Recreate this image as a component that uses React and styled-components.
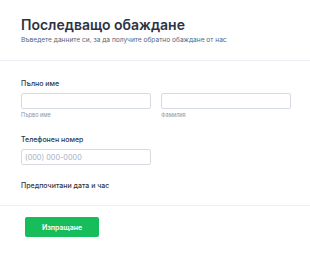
import React from "react";
import styled, { createGlobalStyle } from "styled-components";

const Global = createGlobalStyle`
  html, body { margin: 0; padding: 0; background: #ffffff; }
  body { font-family: Inter, "Noto Sans", sans-serif; -webkit-font-smoothing: antialiased; }
  * { box-sizing: border-box; }
`;

const Page = styled.div`
  width: 310px;
  background: #fff;
`;

const Header = styled.header`
  padding: 16px 19px 15px 21px;
  border-bottom: 1px solid #eceef3;
`;

const Title = styled.h1`
  margin: 0 0 2px;
  font-size: 14px;
  line-height: 18px;
  font-weight: 600;
  color: #2c3345;
`;

const Subtitle = styled.p`
  margin: 0;
  font-size: 6.6px;
  line-height: 9px;
  color: #57647e;
`;

const Body = styled.div`
  padding: 18px 19px 15px 21px;
  display: flex;
  flex-direction: column;
  gap: 16px;
  border-bottom: 1px solid #eceef3;
`;

const Field = styled.div`
  display: flex;
  flex-direction: column;
`;

const Label = styled.label`
  font-size: 7px;
  line-height: 9px;
  font-weight: 500;
  color: #2f3542;
`;

const Row = styled.div`
  display: flex;
  gap: 10px;
  margin-top: 5px;
`;

const Col = styled.div`
  display: flex;
  flex-direction: column;
  width: 130px;
`;

const Input = styled.input`
  width: 130px;
  height: 16px;
  margin: 0;
  margin-top: ${(p) => p.$mt || "0"};
  padding: 0 3px;
  border: 1px solid #d6dae3;
  border-radius: 2px;
  background: #fff;
  font-family: Inter, "Noto Sans", sans-serif;
  font-size: 7.3px;
  color: #2c3345;
  outline: none;
  &::placeholder { color: #a9afc0; }
`;

const SubLabel = styled.span`
  margin-top: 3px;
  font-size: 5.5px;
  line-height: 7px;
  color: #8a93a6;
`;

const Footer = styled.div`
  display: flex;
  padding: 11px 25px;
`;

const Button = styled.button`
  width: 74px;
  height: 20px;
  border: none;
  border-radius: 2px;
  background: #18bd5b;
  color: #fff;
  font-family: Inter, "Noto Sans", sans-serif;
  font-size: 7px;
  font-weight: 600;
  padding: 0;
  cursor: pointer;
`;

export default function App() {
  return (
    <Page>
      <Global />
      <Header>
        <Title>Последващо обаждане</Title>
        <Subtitle>Въведете данните си, за да получите обратно обаждане от нас</Subtitle>
      </Header>
      <Body>
        <Field>
          <Label>Пълно име</Label>
          <Row>
            <Col>
              <Input />
              <SubLabel>Първо име</SubLabel>
            </Col>
            <Col>
              <Input />
              <SubLabel>Фамилия</SubLabel>
            </Col>
          </Row>
        </Field>
        <Field>
          <Label>Телефонен номер</Label>
          <Input $mt="5px" placeholder="(000) 000-0000" />
        </Field>
        <Field>
          <Label>Предпочитани дата и час</Label>
        </Field>
      </Body>
      <Footer>
        <Button>Изпращане</Button>
      </Footer>
    </Page>
  );
}
